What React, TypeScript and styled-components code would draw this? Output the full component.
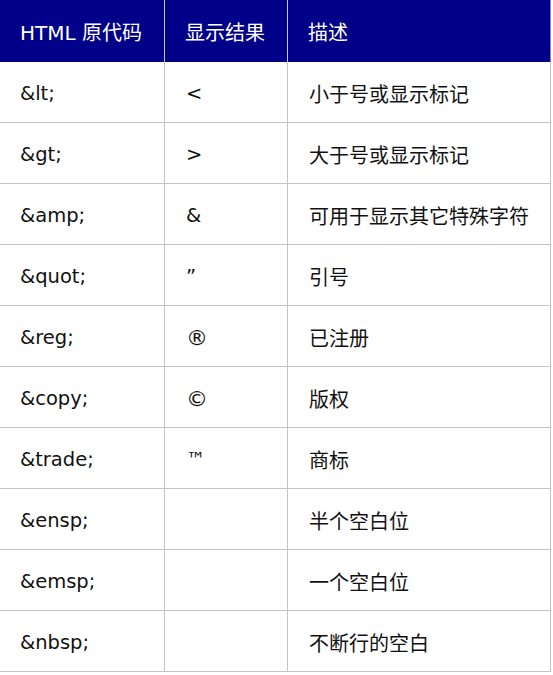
import React from "react";
import styled, { createGlobalStyle } from "styled-components";

const Global = createGlobalStyle`
  html, body { margin: 0; padding: 0; background: #fff; }
  body { font-family: "DejaVu Sans", "Noto Sans CJK SC", sans-serif; }
`;

const Table = styled.div`
  display: grid;
  grid-template-columns: 165px 123px 263px;
  width: 551px;
`;

const HeadCell = styled.div<{ $last?: boolean }>`
  height: 62px;
  box-sizing: border-box;
  background: #000088;
  color: #fff;
  font-size: 20px;
  display: flex;
  align-items: center;
  padding: 1px 0 0 20px;
  border-right: 1px solid ${(p) => (p.$last ? "#8a8ab8" : "#c8c8dc")};
`;

const Cell = styled.div<{ $cjk?: boolean }>`
  height: 61px;
  box-sizing: border-box;
  border-right: 1px solid #c4c4c4;
  border-bottom: 1px solid #c4c4c4;
  display: flex;
  align-items: center;
  padding: 3px 0 0 20px;
  font-size: 19.5px;
  color: #111;
  font-family: ${(p) =>
    p.$cjk
      ? `"Noto Sans CJK SC", "DejaVu Sans", sans-serif`
      : `"DejaVu Sans", "Noto Sans CJK SC", sans-serif`};
`;

const Desc = styled(Cell)`
  padding-left: 21px;
  font-size: 20px;
`;

const Sym = styled(Cell)<{ $big?: boolean }>`
  padding-left: 21px;
  font-size: ${(p) => (p.$big ? "22px" : "19.5px")};
`;

const rows: [string, string, string][] = [
  ["&lt;", "<", "小于号或显示标记"],
  ["&gt;", ">", "大于号或显示标记"],
  ["&amp;", "&", "可用于显示其它特殊字符"],
  ["&quot;", "\u201D", "引号"],
  ["&reg;", "®", "已注册"],
  ["&copy;", "©", "版权"],
  ["&trade;", "™", "商标"],
  ["&ensp;", "", "半个空白位"],
  ["&emsp;", "", "一个空白位"],
  ["&nbsp;", "", "不断行的空白"],
];

export default function App() {
  return (
    <>
      <Global />
      <Table>
        <HeadCell>HTML 原代码</HeadCell>
        <HeadCell>显示结果</HeadCell>
        <HeadCell $last>描述</HeadCell>
        {rows.map(([code, sym, desc]) => (
          <React.Fragment key={code}>
            <Cell>{code}</Cell>
            <Sym $big={sym === "®" || sym === "©"}>{sym}</Sym>
            <Desc $cjk>{desc}</Desc>
          </React.Fragment>
        ))}
      </Table>
    </>
  );
}
